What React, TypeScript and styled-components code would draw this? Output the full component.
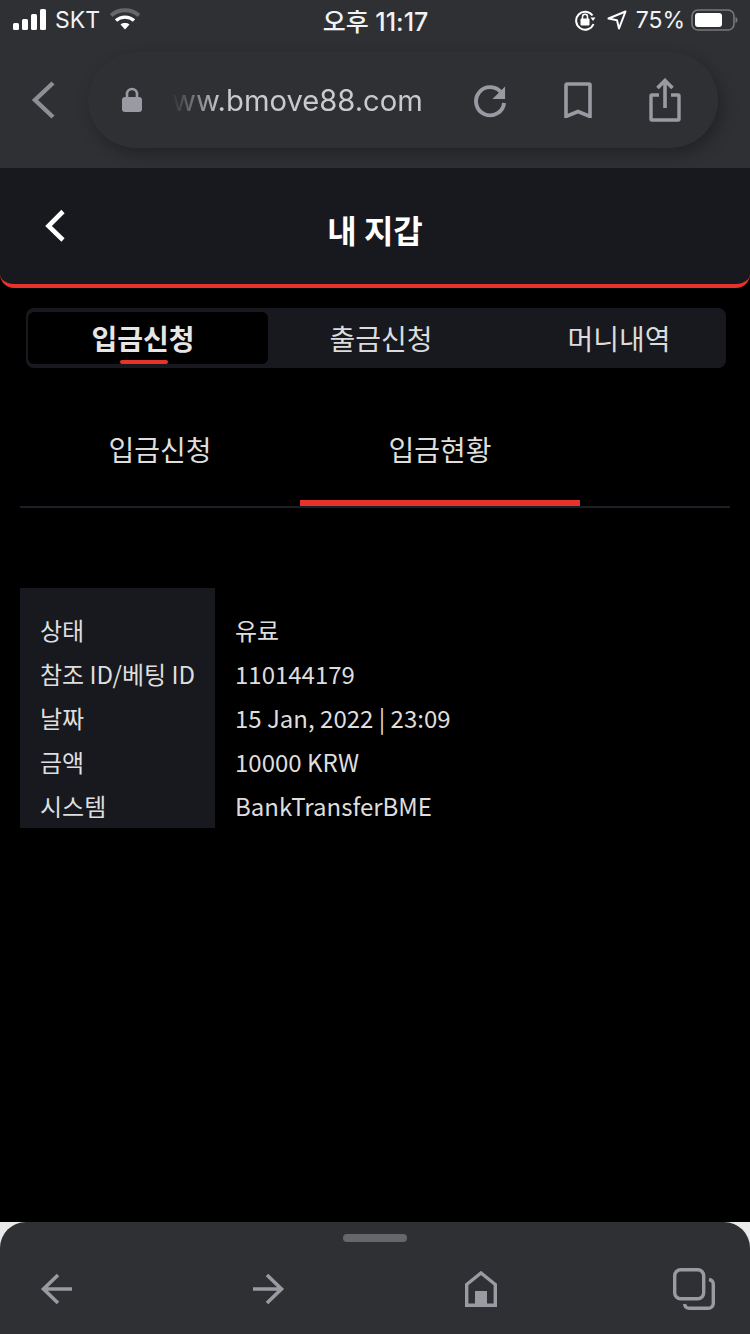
import React from "react";
import styled, { createGlobalStyle } from "styled-components";

const Global = createGlobalStyle`
  html, body { margin: 0; padding: 0; background: #000; }
  * { box-sizing: border-box; }
`;

const KR = `"Noto Sans CJK KR", "Noto Sans", sans-serif`;
const UI = `Inter, "Noto Sans CJK KR", sans-serif`;

const Screen = styled.div`
  width: 750px;
  height: 1334px;
  display: flex;
  flex-direction: column;
  overflow: hidden;
  background: #000;
  font-family: ${KR};
`;

const BrowserChrome = styled.header`
  height: 168px;
  background: #2f3034;
  display: flex;
  flex-direction: column;
`;

const StatusBar = styled.div`
  height: 40px;
  padding: 0 12px 1px 13px;
  display: grid;
  grid-template-columns: 1fr auto 1fr;
  align-items: center;
  color: #f2f2f3;
  font-family: ${UI};
  font-size: 23px;
`;

const StatusLeft = styled.div`
  display: flex;
  align-items: center;
  gap: 9px;
`;

const StatusRight = styled.div`
  display: flex;
  align-items: center;
  justify-content: flex-end;
  gap: 9px;
`;

const Clock = styled.div`
  font-size: 25px;
  font-weight: 500;
  font-family: ${UI};
  white-space: nowrap;
`;

const Toolbar = styled.div`
  display: flex;
  align-items: center;
  margin-top: 12px;
  padding-left: 29px;
`;

const Pill = styled.div`
  margin-left: 29px;
  width: 630px;
  height: 96px;
  border-radius: 48px;
  background: #2f3034;
  box-shadow: 4px 6px 16px rgba(0, 0, 0, 0.28);
  display: flex;
  align-items: center;
  padding-left: 33px;
`;

const UrlText = styled.div`
  width: 250px;
  margin-left: 29px;
  color: #c9cacd;
  font-family: ${UI};
  font-size: 29.2px;
  white-space: nowrap;
  -webkit-mask-image: linear-gradient(90deg, transparent 0, #000 48px);
  mask-image: linear-gradient(90deg, transparent 0, #000 48px);
`;

const PillIcons = styled.div`
  display: flex;
  align-items: center;
  margin-left: 52px;
  gap: 57px;
`;

const PageHeader = styled.div`
  height: 120px;
  background: #18191e;
  border-bottom: 4px solid #e8332a;
  border-radius: 0 0 14px 14px;
  display: flex;
  align-items: center;
  justify-content: center;
  padding-top: 6px;
  position: relative;
  color: #fff;
`;

const HeaderBack = styled.div`
  position: absolute;
  left: 44px;
  top: 40px;
  display: flex;
`;

const Title = styled.h1`
  margin: 0;
  font-size: 32px;
  font-weight: 700;
  line-height: 1;
`;

const MainTabs = styled.nav`
  margin: 20px 24px 0 26px;
  height: 60px;
  padding: 4px 2px;
  border-radius: 8px;
  background: #18191e;
  display: grid;
  grid-template-columns: 240px 226px 1fr;
`;

const MainTab = styled.div<{ $active?: boolean }>`
  position: relative;
  display: flex;
  align-items: center;
  justify-content: center;
  border-radius: 6px;
  font-size: 28px;
  font-weight: ${(p) => (p.$active ? 700 : 400)};
  color: ${(p) => (p.$active ? "#e6e6e6" : "#dcdcdc")};
  background: ${(p) => (p.$active ? "#000" : "transparent")};
  &:nth-child(1) {
    padding-right: 10px;
  }
  &:nth-child(3) {
    padding-left: 20px;
  }
`;

const ActiveMark = styled.span`
  position: absolute;
  left: 92px;
  bottom: 0;
  width: 48px;
  height: 4px;
  border-radius: 2px;
  background: #e8332a;
`;

const SubTabs = styled.div`
  margin: 32px 20px 0;
  height: 108px;
  display: flex;
  border-bottom: 2px solid #1e1e29;
`;

const SubTab = styled.div<{ $active?: boolean }>`
  width: 280px;
  height: 106px;
  display: flex;
  align-items: center;
  justify-content: center;
  padding-bottom: 2px;
  color: #dedede;
  font-size: 28px;
  border-bottom: 6px solid ${(p) => (p.$active ? "#e8332a" : "transparent")};
`;

const InfoTable = styled.dl`
  margin: 80px 0 0 20px;
  display: grid;
  grid-template-columns: 195px auto;
  grid-template-rows: 20px repeat(5, 44px);
  justify-content: start;
  font-size: 24px;
  color: #dedede;
`;

const LabelSpacer = styled.div`
  background: #18191e;
  grid-column: 1 / 3;
  width: 195px;
`;

const Label = styled.dt`
  background: #18191e;
  padding: 0 0 2px 20px;
  display: flex;
  align-items: center;
  white-space: nowrap;
`;

const Value = styled.dd`
  margin: 0;
  padding: 0 0 2px 20px;
  display: flex;
  align-items: center;
  white-space: nowrap;
`;

const Spacer = styled.div`
  flex: 1;
`;

const BottomWrap = styled.footer`
  height: 112px;
  background: #e9e9e9;
`;

const BottomBar = styled.div`
  height: 112px;
  background: #2f3034;
  border-radius: 26px 26px 0 0;
  display: flex;
  flex-direction: column;
  align-items: center;
`;

const Handle = styled.div`
  margin-top: 12px;
  width: 64px;
  height: 8px;
  border-radius: 4px;
  background: #66676b;
`;

const BottomIcons = styled.div`
  width: 100%;
  margin-top: 25px;
  padding: 0 34px;
  display: flex;
  justify-content: space-between;
`;

const IconSlot = styled.div`
  width: 44px;
  height: 44px;
  display: flex;
  align-items: center;
  justify-content: center;
`;

const G = "#9a9ba2";

export default function App() {
  return (
    <Screen>
      <Global />
      <BrowserChrome>
        <StatusBar>
          <StatusLeft>
            <svg width="33" height="22" viewBox="0 0 33 22">
              <rect x="0" y="14" width="6" height="7" rx="1.5" fill="#fff" />
              <rect x="9" y="10" width="6" height="11" rx="1.5" fill="#fff" />
              <rect x="18" y="5" width="6" height="16" rx="1.5" fill="#fff" />
              <rect x="27" y="0" width="6" height="21" rx="1.5" fill="#fff" />
            </svg>
            <span>SKT</span>
            <svg width="30" height="24" viewBox="0 0 30 24" style={{ marginLeft: 1 }}>
              <path d="M1 7.500C9 .5 21 .5 29 7.500" stroke="#66676b" strokeWidth="4" fill="none" />
              <path d="M6 12.500C11 8 19 8 24 12.500" stroke="#fff" strokeWidth="3.400" fill="none" />
              <path d="M10.500 16.500C13 14.600 17 14.600 19.500 16.500L15 21.500Z" fill="#fff" />
            </svg>
          </StatusLeft>
          <Clock>오후 11:17</Clock>
          <StatusRight>
            <svg width="22" height="22" viewBox="0 0 22 22" style={{ marginRight: 2 }}>
              <path d="M18.500 6.500A9 9 0 1 0 19.500 15" stroke="#fff" strokeWidth="2" fill="none" />
              <path d="M16.500 8.500h5l-2.500 3.500Z" fill="#fff" />
              <rect x="6.500" y="9.500" width="9" height="7" rx="1" fill="#fff" />
              <path d="M8.500 10V7.800a2.500 2.500 0 0 1 5 0V10" stroke="#fff" strokeWidth="1.500" fill="none" />
            </svg>
            <svg width="20" height="20" viewBox="0 0 20 20">
              <path d="M18.500 1.500 1.500 8.500 10 10.200 12 18.500Z" stroke="#fff" strokeWidth="2" strokeLinejoin="round" fill="none" />
            </svg>
            <span>75%</span>
            <svg width="47" height="24" viewBox="0 0 47 24" style={{ marginLeft: -3 }}>
              <rect x="1" y="2" width="42" height="20" rx="6" stroke="#77787c" strokeWidth="1.600" fill="none" />
              <rect x="4" y="5" width="27" height="14" rx="3" fill="#fff" />
              <path d="M44.500 9c1.500.6 2 1.600 2 3s-.5 2.400-2 3Z" fill="#77787c" />
            </svg>
          </StatusRight>
        </StatusBar>
        <Toolbar>
          <svg width="30" height="40" viewBox="0 0 30 40">
            <path d="M24 3 6 20l18 17" stroke="#8e8f95" strokeWidth="4.400" fill="none" />
          </svg>
          <Pill>
            <svg width="22" height="28" viewBox="0 0 22 28">
              <path d="M6 13V8a5 5 0 0 1 10 0v5" stroke={G} strokeWidth="2.600" fill="none" />
              <rect x="1" y="11" width="20" height="15" rx="3" fill={G} />
            </svg>
            <UrlText>ww.bmove88.com</UrlText>
            <PillIcons>
              <svg width="33" height="36" viewBox="0 0 34 36">
                <path d="M28.500 11A14.500 14.500 0 1 0 31 21" stroke={G} strokeWidth="4" fill="none" />
                <path d="M32 4v13H19Z" fill={G} />
              </svg>
              <svg width="28" height="36" viewBox="0 0 28 36">
                <path d="M2 34.500V3a1 1 0 0 1 1-1h22a1 1 0 0 1 1 1v31.500L14 29.500Z" stroke={G} strokeWidth="3.600" fill="none" />
              </svg>
              <svg width="32" height="44" viewBox="0 0 32 44">
                <path d="M10 17H3a1 1 0 0 0-1 1v23a1 1 0 0 0 1 1h26a1 1 0 0 0 1-1V18a1 1 0 0 0-1-1h-7" stroke={G} strokeWidth="3.400" fill="none" />
                <path d="M16 30V4" stroke={G} strokeWidth="3.600" />
                <path d="M8.500 10 16 2.500 23.500 10" stroke={G} strokeWidth="3.600" fill="none" />
              </svg>
            </PillIcons>
          </Pill>
        </Toolbar>
      </BrowserChrome>

      <PageHeader>
        <HeaderBack>
          <svg width="22" height="34" viewBox="0 0 22 34">
            <path d="M19 3.500 4.500 18 19 32" stroke="#fff" strokeWidth="4.600" fill="none" />
          </svg>
        </HeaderBack>
        <Title>내 지갑</Title>
      </PageHeader>

      <MainTabs>
        <MainTab $active>
          입금신청
          <ActiveMark />
        </MainTab>
        <MainTab>출금신청</MainTab>
        <MainTab>머니내역</MainTab>
      </MainTabs>

      <SubTabs>
        <SubTab>입금신청</SubTab>
        <SubTab $active>입금현황</SubTab>
      </SubTabs>

      <InfoTable>
        <LabelSpacer />
        <Label>상태</Label>
        <Value>유료</Value>
        <Label>참조 ID/베팅 ID</Label>
        <Value>110144179</Value>
        <Label>날짜</Label>
        <Value>15 Jan, 2022 | 23:09</Value>
        <Label>금액</Label>
        <Value>10000 KRW</Value>
        <Label>시스템</Label>
        <Value>BankTransferBME</Value>
      </InfoTable>

      <Spacer />

      <BottomWrap>
        <BottomBar>
          <Handle />
          <BottomIcons>
            <IconSlot>
              <svg width="32" height="32" viewBox="0 0 32 32">
                <path d="M32 16H3M18 2 3.500 16 18 30" stroke={G} strokeWidth="3.600" fill="none" />
              </svg>
            </IconSlot>
            <IconSlot>
              <svg width="32" height="32" viewBox="0 0 32 32">
                <path d="M0 16h29M14 2l14.500 14L14 30" stroke={G} strokeWidth="3.600" fill="none" />
              </svg>
            </IconSlot>
            <IconSlot>
              <svg width="32" height="36" viewBox="0 0 32 36">
                <path d="M1.700 34.300V13.500L16 2l14.300 11.500v20.800Z" stroke={G} strokeWidth="3.400" fill="none" />
                <rect x="10" y="20" width="12" height="14" fill={G} />
              </svg>
            </IconSlot>
            <IconSlot>
              <svg width="42" height="42" viewBox="0 0 42 42">
                <rect x="1.700" y="1.700" width="29" height="29" rx="6" stroke={G} strokeWidth="3.400" fill="none" />
                <path d="M36 11.500c2.800.5 4.300 2.300 4.300 5v18.800a5 5 0 0 1-5 5H16.500c-2.700 0-4.500-1.500-5-4.300" stroke={G} strokeWidth="3.400" fill="none" />
              </svg>
            </IconSlot>
          </BottomIcons>
        </BottomBar>
      </BottomWrap>
    </Screen>
  );
}
